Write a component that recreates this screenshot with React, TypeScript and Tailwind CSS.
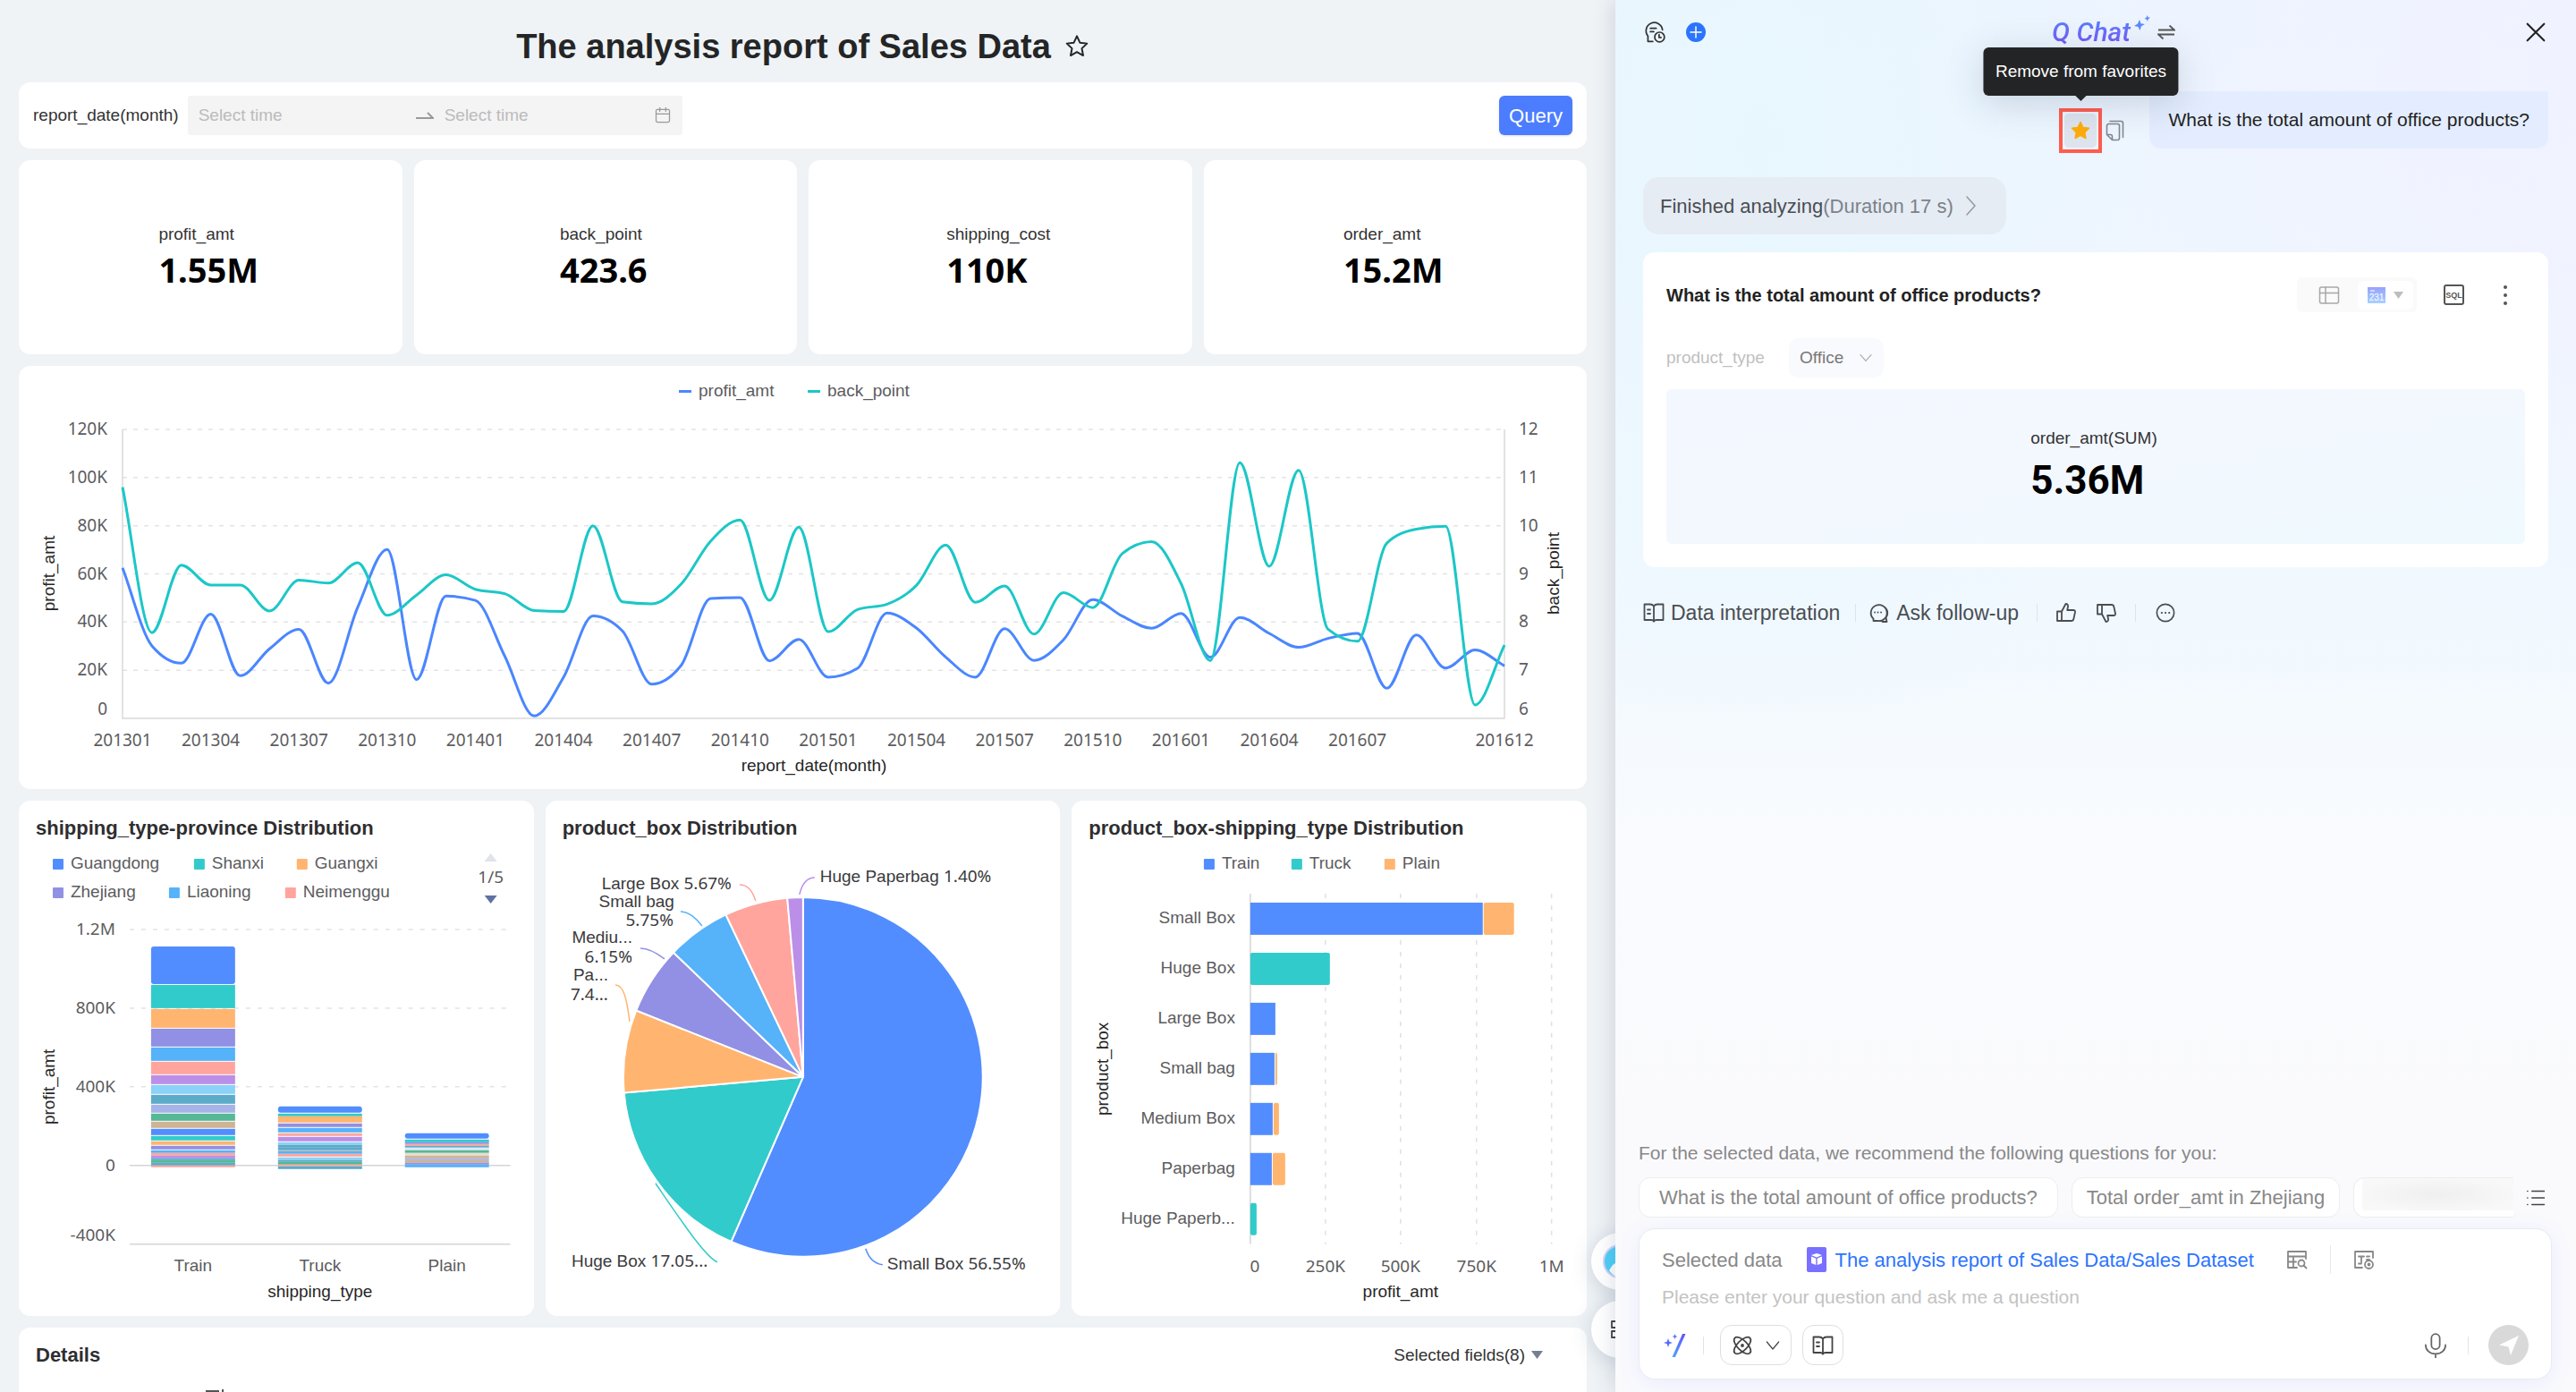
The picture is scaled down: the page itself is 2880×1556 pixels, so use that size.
import React from "react";
import clsx from "clsx";

const kpis = [
  { label: "profit_amt", value: "1.55M" },
  { label: "back_point", value: "423.6" },
  { label: "shipping_cost", value: "110K" },
  { label: "order_amt", value: "15.2M" },
];

const profit = [
  62.5, 30.1, 22.9, 43.3, 17.7, 28.9, 37, 14.6, 46.2, 70.1, 16.1, 50.8, 49,
  25.8, 1, 17.1, 42.5, 36.3, 14.2, 22, 49.8, 50.2, 23.9, 32.8, 17.1, 20.8, 43.7,
  37.5, 25.4, 17.1, 37.2, 24.1, 32.6, 49.3, 42.5, 37.4, 43.6, 25.4, 41.9, 35.3,
  29.5, 33.2, 35.3, 12.5, 34.6, 20.9, 28.4, 21.8,
];

const backPoint = [
  10.8, 7.78, 9.18, 8.77, 8.77, 8.23, 8.87, 8.81, 9.23, 8.14, 8.56, 8.98, 8.68,
  8.59, 8.24, 8.22, 10, 8.42, 8.38, 8.79, 9.68, 10.12, 8.45, 9.97, 7.8, 8.26,
  8.37, 8.76, 9.6, 8.41, 8.75, 7.75, 8.61, 8.3, 9.42, 9.67, 8.8, 7.2, 11.31,
  9.16, 11.15, 7.85, 7.6, 9.64, 9.93, 9.99, 6.28, 7.52,
];

const months = [
  { label: "201301", i: 0 },
  { label: "201304", i: 3 },
  { label: "201307", i: 6 },
  { label: "201310", i: 9 },
  { label: "201401", i: 12 },
  { label: "201404", i: 15 },
  { label: "201407", i: 18 },
  { label: "201410", i: 21 },
  { label: "201501", i: 24 },
  { label: "201504", i: 27 },
  { label: "201507", i: 30 },
  { label: "201510", i: 33 },
  { label: "201601", i: 36 },
  { label: "201604", i: 39 },
  { label: "201607", i: 42 },
  { label: "201612", i: 47 },
];

const BLUE = "#528dff";
const TEAL = "#32cbcb";
const ORANGE = "#ffb570";
const PURPLE = "#9190e4";
const SKY = "#56b2f9";
const PINK = "#ffa59d";
const VIOLET = "#bb8fe8";
const LIGHT = "#8bd1f8";
const STEEL = "#5cabc9";
const PERI = "#a5b3e8";
const GREEN = "#55b896";
const TAN = "#cfb395";

const palette = [BLUE, TEAL, ORANGE, PURPLE, SKY, PINK, VIOLET, LIGHT, STEEL, PERI, GREEN, TAN];

// top edge of every segment, the last number closes the stack
const stacks = [
  {
    label: "Train",
    x: 148,
    edges: [163, 206, 233, 255, 276, 292, 307, 318, 329, 340, 350, 359, 367, 375, 381, 386, 391, 394, 397, 400, 402, 405, 408, 410],
    colors: [...palette, BLUE, TEAL, ORANGE, PURPLE, SKY, PINK, VIOLET, STEEL, GREEN, STEEL, PINK],
  },
  {
    label: "Truck",
    x: 290,
    edges: [342, 350, 353, 361, 366, 372, 376, 382, 385, 388, 391, 392, 395, 399, 402, 404, 407, 409, 412],
    colors: [BLUE, TEAL, ORANGE, PURPLE, SKY, PINK, VIOLET, LIGHT, STEEL, STEEL, TAN, SKY, PINK, LIGHT, STEEL, GREEN, PINK, STEEL],
  },
  {
    label: "Plain",
    x: 432,
    edges: [372, 379, 382, 384, 386, 388, 391, 394, 397, 400, 402, 405, 407, 410],
    colors: [BLUE, TEAL, PURPLE, PINK, STEEL, "#dfe6f5", GREEN, "#e6ddd0", TAN, PERI, TAN, PURPLE, SKY],
  },
];

const provinces = [
  { name: "Guangdong", color: BLUE, x: 38, y: 70 },
  { name: "Shanxi", color: TEAL, x: 196, y: 70 },
  { name: "Guangxi", color: ORANGE, x: 311, y: 70 },
  { name: "Zhejiang", color: PURPLE, x: 38, y: 102 },
  { name: "Liaoning", color: SKY, x: 168, y: 102 },
  { name: "Neimenggu", color: PINK, x: 298, y: 102 },
];

const slices = [
  { value: 56.55, color: BLUE },
  { value: 17.05, color: TEAL },
  { value: 7.43, color: ORANGE },
  { value: 6.15, color: PURPLE },
  { value: 5.75, color: SKY },
  { value: 5.67, color: PINK },
  { value: 1.4, color: VIOLET },
];

const boxes = [
  { name: "Small Box", bars: [{ w: 260, c: BLUE }, { w: 35, c: ORANGE }] },
  { name: "Huge Box", bars: [{ w: 89, c: TEAL }] },
  { name: "Large Box", bars: [{ w: 28, c: BLUE }] },
  { name: "Small bag", bars: [{ w: 27, c: BLUE }, { w: 3, c: ORANGE }] },
  { name: "Medium Box", bars: [{ w: 25, c: BLUE }, { w: 7, c: ORANGE }] },
  { name: "Paperbag", bars: [{ w: 24, c: BLUE }, { w: 15, c: ORANGE }] },
  { name: "Huge Paperb...", bars: [{ w: 7, c: TEAL }] },
];

const NUM = "font-['Noto_Sans',sans-serif]";

// monotone cubic interpolation, keeps peaks from overshooting
const smoothPath = (pts: number[][]) => {
  const n = pts.length;
  const slope = (i: number) => (pts[i + 1][1] - pts[i][1]) / (pts[i + 1][0] - pts[i][0]);
  const m = pts.map((_, i) => {
    if (i === 0) return slope(0);
    if (i === n - 1) return slope(n - 2);
    const a = slope(i - 1);
    const b = slope(i);
    if (a * b <= 0) return 0;
    return Math.sign(a) * Math.min(Math.abs(a + b) / 2, 2 * Math.abs(a), 2 * Math.abs(b));
  });
  let d = `M${pts[0][0]} ${pts[0][1]}`;
  for (let i = 0; i < n - 1; i++) {
    const h = (pts[i + 1][0] - pts[i][0]) / 3;
    d += `C${pts[i][0] + h} ${pts[i][1] + m[i] * h} ${pts[i + 1][0] - h} ${pts[i + 1][1] - m[i + 1] * h} ${pts[i + 1][0]} ${pts[i + 1][1]}`;
  }
  return d;
};

const Icon = ({
  children,
  className = "size-6",
  strokeWidth = 1.8,
}: {
  children: React.ReactNode;
  className?: string;
  strokeWidth?: number;
}) => (
  <svg
    viewBox="0 0 24 24"
    fill="none"
    stroke="currentColor"
    strokeWidth={strokeWidth}
    strokeLinecap="round"
    strokeLinejoin="round"
    className={clsx("shrink-0", className)}
    aria-hidden="true"
  >
    {children}
  </svg>
);

const BookIcon = ({ className }: { className?: string }) => (
  <Icon className={className}>
    <path d="M12 4.500C11 3.200 9.500 2.500 8 2.500H1.500v17.500H9c1.500 0 2.500.5 3 1.800.5-1.300 1.500-1.800 3-1.800h7.500V2.500H16c-1.500 0-3 .7-4 2zM12 4.500v17M5 8.500h3M5 13h3" />
  </Icon>
);

const Card = ({ children, className }: { children: React.ReactNode; className?: string }) => (
  <section className={clsx("rounded-[13px] bg-white", className)}>{children}</section>
);

const CardTitle = ({ children }: { children: React.ReactNode }) => (
  <h2 className="px-[19px] pt-4 text-[22px] leading-[30px] font-bold text-[#2e2e30]">{children}</h2>
);

const Label = ({
  x,
  y,
  children,
  anchor = "start",
  num,
  fill = "#5c5c5e",
}: {
  x: number;
  y: number;
  children: React.ReactNode;
  anchor?: "start" | "middle" | "end";
  num?: boolean;
  fill?: string;
}) => (
  <text x={x} y={y + 6} textAnchor={anchor} fill={fill} fontSize={19} className={num ? NUM : undefined}>
    {children}
  </text>
);

const AxisName = ({ x, y, children }: { x: number; y: number; children: string }) => (
  <text transform={`translate(${x + 5} ${y}) rotate(-90)`} textAnchor="middle" fill="#262626" fontSize={19}>
    {children}
  </text>
);

const LineChart = () => {
  const x0 = 116;
  const x1 = 1661;
  const top = 71;
  const bottom = 394;
  const px = (i: number) => x0 + ((x1 - x0) * i) / 47;
  const lineA = profit.map((v, i) => [px(i), bottom - ((bottom - top) * v) / 120]);
  const lineB = backPoint.map((v, i) => [px(i), bottom - ((bottom - top) * (v - 6)) / 6]);
  return (
    <svg viewBox="0 0 1753 473" className="block w-full" role="img" aria-label="profit_amt and back_point by month">
      <rect x="738" y="27" width="14" height="3" fill="#4a86ff" />
      <Label x={760} y={28}>profit_amt</Label>
      <rect x="882" y="27" width="14" height="3" fill="#1cc7c7" />
      <Label x={904} y={28}>back_point</Label>
      {[0, 1, 2, 3, 4, 5].map((n) => {
        const y = top + (n * (bottom - top)) / 6;
        return (
          <g key={n}>
            <line x1={x0} x2={x1} y1={y} y2={y} stroke="#e3e3e3" strokeWidth="1.500" strokeDasharray="5 7" />
            <Label x={99} y={y} anchor="end" num>{`${120 - n * 20}K`}</Label>
            <Label x={1677} y={y} num>{12 - n}</Label>
          </g>
        );
      })}
      <Label x={99} y={384} anchor="end" num>0</Label>
      <Label x={1677} y={384} num>6</Label>
      <path d={`M${x0} ${top}V${bottom}H${x1}V${top}`} fill="none" stroke="#d9d9d9" strokeWidth="1.500" />
      {months.map((m) => (
        <Label key={m.label} x={px(m.i)} y={419} anchor="middle" num>{m.label}</Label>
      ))}
      <path d={smoothPath(lineA)} fill="none" stroke="#4a86ff" strokeWidth="3" />
      <path d={smoothPath(lineB)} fill="none" stroke="#1cc7c7" strokeWidth="3" />
      <Label x={889} y={447} anchor="middle" fill="#262626">report_date(month)</Label>
      <AxisName x={35} y={232}>profit_amt</AxisName>
      <AxisName x={1717} y={232}>back_point</AxisName>
    </svg>
  );
};

const ProvinceChart = () => (
  <svg viewBox="0 46 576 530" className="block w-full" role="img" aria-label="profit_amt by shipping_type and province">
    {provinces.map((p) => (
      <g key={p.name}>
        <rect x={p.x} y={p.y - 5} width="12" height="12" rx="1" fill={p.color} />
        <Label x={p.x + 20} y={p.y}>{p.name}</Label>
      </g>
    ))}
    <path d="M521 68l7-9 7 9z" fill="#e0e2ec" />
    <Label x={528} y={86} anchor="middle" num>1/5</Label>
    <path d="M521 106h14l-7 9z" fill="#6072a4" />
    {[
      { t: "1.2M", y: 144 },
      { t: "800K", y: 232 },
      { t: "400K", y: 320 },
    ].map((g) => (
      <g key={g.t}>
        <line x1="124" x2="550" y1={g.y} y2={g.y} stroke="#e3e3e3" strokeWidth="1.500" strokeDasharray="5 8" />
        <Label x={108} y={g.y} anchor="end" num>{g.t}</Label>
      </g>
    ))}
    <Label x={108} y={408} anchor="end" num>0</Label>
    <Label x={108} y={486} anchor="end" num>-400K</Label>
    <path d="M124 408h426M124 496h426" stroke="#d5d5d5" strokeWidth="1.500" />
    {stacks.map((s) => (
      <g key={s.label}>
        {s.colors.map((c, i) => {
          const h = s.edges[i + 1] - s.edges[i];
          return (
            <rect key={i} x={s.x} y={s.edges[i]} width="94" height={h > 3 ? h - 1 : h} rx={i === 0 ? 3 : 0} fill={c} />
          );
        })}
        <Label x={s.x + 47} y={520} anchor="middle">{s.label}</Label>
      </g>
    ))}
    <Label x={337} y={549} anchor="middle" fill="#262626">shipping_type</Label>
    <AxisName x={35} y={320}>profit_amt</AxisName>
  </svg>
);

const PieLabel = ({ x, y, name, value, end }: { x: number; y: number; name?: string; value?: string; end?: boolean }) => (
  <Label x={x} y={y} anchor={end ? "end" : "start"} fill="#3a3a3c">
    {name}
    {name && value ? " " : ""}
    {value && <tspan className={NUM}>{value}</tspan>}
  </Label>
);

const PieChart = () => {
  const cx = 288;
  const cy = 309;
  const r = 201;
  const at = (pct: number) => {
    const a = (pct / 100) * Math.PI * 2;
    return `${cx + r * Math.sin(a)} ${cy - r * Math.cos(a)}`;
  };
  let sum = 0;
  return (
    <svg viewBox="0 46 576 530" className="block w-full" role="img" aria-label="product_box share">
      {slices.map((s) => {
        const from = at(sum);
        sum += s.value;
        return (
          <path
            key={s.color}
            d={`M${cx} ${cy}L${from}A${r} ${r} 0 ${s.value > 50 ? 1 : 0} 1 ${at(sum)}Z`}
            fill={s.color}
            stroke="#fff"
            strokeWidth="2"
          />
        );
      })}
      <g fill="none" strokeWidth="1.500">
        <path d="M284 105C287 92 292 86 301 86" stroke={VIOLET} />
        <path d="M217 94c9 0 14 6 18 18" stroke={PINK} />
        <path d="M151 124c9 0 17 7 24 16" stroke={SKY} />
        <path d="M106 165c9 0 18 5 27 12" stroke={PURPLE} />
        <path d="M78 206c10 0 13 18 16 41" stroke={ORANGE} />
        <path d="M123 428c24 35 55 82 69 88" stroke={TEAL} />
        <path d="M358 501c4 12 10 17 19 18" stroke={BLUE} />
      </g>
      <PieLabel x={307} y={85} name="Huge Paperbag" value="1.40%" />
      <PieLabel x={208} y={93} name="Large Box" value="5.67%" end />
      <PieLabel x={144} y={113} name="Small bag" end />
      <PieLabel x={143} y={134} value="5.75%" end />
      <PieLabel x={97} y={153} name="Mediu..." end />
      <PieLabel x={97} y={175} value="6.15%" end />
      <PieLabel x={70} y={195} name="Pa..." end />
      <PieLabel x={70} y={217} value="7.4..." end />
      <PieLabel x={29} y={515} name="Huge Box" value="17.05..." />
      <PieLabel x={382} y={518} name="Small Box" value="56.55%" />
    </svg>
  );
};

const BoxChart = () => (
  <svg viewBox="0 46 576 530" className="block w-full" role="img" aria-label="profit_amt by product_box and shipping_type">
    {[
      { t: "Train", c: BLUE, x: 148 },
      { t: "Truck", c: TEAL, x: 246 },
      { t: "Plain", c: ORANGE, x: 350 },
    ].map((l) => (
      <g key={l.t}>
        <rect x={l.x} y="65" width="12" height="12" rx="1" fill={l.c} />
        <Label x={l.x + 20} y={70}>{l.t}</Label>
      </g>
    ))}
    {[284, 368, 453, 537].map((x) => (
      <line key={x} x1={x} x2={x} y1="104" y2="496" stroke="#e0e0e0" strokeWidth="1.500" strokeDasharray="5 8" />
    ))}
    <path d="M200 104v392" stroke="#d5d5d5" strokeWidth="1.500" />
    {boxes.map((b, row) => {
      const cy = 132 + row * 56;
      let x = 200;
      return (
        <g key={b.name}>
          <Label x={183} y={cy - 1} anchor="end">{b.name}</Label>
          {b.bars.map((bar, i) => {
            const left = x;
            x += bar.w;
            return (
              <rect key={i} x={i ? left + 1 : left} y={cy - 18} width={i ? bar.w - 1 : bar.w} height="36" rx={bar.c === BLUE ? 0 : 2} fill={bar.c} />
            );
          })}
        </g>
      );
    })}
    <Label x={205} y={521} anchor="middle" num>0</Label>
    <Label x={284} y={521} anchor="middle" num>250K</Label>
    <Label x={368} y={521} anchor="middle" num>500K</Label>
    <Label x={453} y={521} anchor="middle" num>750K</Label>
    <Label x={537} y={521} anchor="middle" num>1M</Label>
    <Label x={368} y={549} anchor="middle" fill="#262626">profit_amt</Label>
    <AxisName x={36} y={300}>product_box</AxisName>
  </svg>
);

const Report = () => (
  <main className="relative h-full min-w-0 flex-1 overflow-hidden bg-[#eff3f6] pr-8 pl-[21px]">
    <header className="flex h-[92px] items-center justify-center gap-[15px] pt-3">
      <h1 className="text-[38px] leading-[50px] font-bold text-[#242526]">The analysis report of Sales Data</h1>
      <button aria-label="Add to favorites" className="text-[#242526]">
        <Icon className="size-[28px]" strokeWidth={1.7}>
          <path d="M12 2l2.900 6.300 6.800.8-5 4.700 1.300 6.800-6-3.400-6 3.400 1.300-6.800-5-4.700 6.800-.8z" />
        </Icon>
      </button>
    </header>

    <div className="flex flex-col gap-[13px]">
      <Card className="flex items-center px-4 py-[15px]">
        <label htmlFor="from" className="mr-2.5 text-[19px] text-[#333]">
          report_date(month)
        </label>
        <div className="flex h-11 items-center rounded-[3px] bg-[#f4f4f4] px-3 text-[19px] text-[#999]">
          <input id="from" placeholder="Select time" className="w-[243px] bg-transparent outline-none placeholder:text-[#bbb]" />
          <svg viewBox="0 0 20 12" className="mr-3 w-5" fill="none" stroke="currentColor" strokeWidth="2" aria-hidden="true">
            <path d="M0 9h19l-6-6" />
          </svg>
          <input aria-label="End time" placeholder="Select time" className="w-[234px] bg-transparent outline-none placeholder:text-[#bbb]" />
          <Icon className="size-5" strokeWidth={1.5}>
            <rect x="3" y="4" width="18" height="17" rx="2" />
            <path d="M3 10h18M8 1.500v5M16 1.500v5" />
          </Icon>
        </div>
        <button className="ml-auto h-11 rounded-[6px] bg-[#4c7dff] px-[11px] text-[22px] text-white shadow-sm">Query</button>
      </Card>

      <div className="grid grid-cols-4 gap-[13px]">
        {kpis.map((k) => (
          <Card key={k.label} className="flex justify-center pt-[67px] pr-1 pb-[71px]">
            <div>
              <div className="text-[19px] leading-[31px] text-[#333]">{k.label}</div>
              <div className="font-['Noto_Sans',sans-serif] text-[38px] leading-[48px] font-bold text-black">{k.value}</div>
            </div>
          </Card>
        ))}
      </div>

      <Card>
        <LineChart />
      </Card>

      <div className="grid grid-cols-3 gap-[13px]">
        <Card>
          <CardTitle>shipping_type-province Distribution</CardTitle>
          <ProvinceChart />
        </Card>
        <Card>
          <CardTitle>product_box Distribution</CardTitle>
          <PieChart />
        </Card>
        <Card>
          <CardTitle>product_box-shipping_type Distribution</CardTitle>
          <BoxChart />
        </Card>
      </div>

      <Card className="h-40">
        <div className="flex items-center justify-between">
          <CardTitle>Details</CardTitle>
          <button className="mr-[49px] flex items-center gap-[7px] pt-4 text-[19px] leading-[30px] text-[#333]">
            Selected fields(8)
            <svg viewBox="0 0 13 9" className="w-[13px]" aria-hidden="true">
              <path d="M0 0h13L6.500 9z" fill="#777d92" />
            </svg>
          </button>
        </div>
        <svg viewBox="0 0 22 22" className="mt-[22px] ml-[209px] w-[22px]" fill="none" stroke="#555" strokeWidth="2" aria-hidden="true">
          <path d="M0 3h15M0 10h10M0 17h10M19 1v18l-4-5" />
        </svg>
      </Card>
    </div>

    <button
      aria-label="Assistant"
      className="absolute right-[-37px] bottom-[114px] flex size-16 items-center justify-center rounded-full bg-white shadow-[0_4px_24px_rgba(60,80,120,0.2)]"
    >
      <svg viewBox="0 0 38 38" className="w-[38px]" aria-hidden="true">
        <circle cx="19" cy="19" r="18" fill="#4fd0f8" stroke="#cfd2f8" strokeWidth="2" />
        <path d="M7 29c3-4 4-9 12-9v17c-5 0-9-4-12-8z" fill="#fff" />
      </svg>
    </button>
    <button
      aria-label="Apps"
      className="absolute right-[-37px] bottom-[38px] flex size-16 items-center justify-center rounded-full bg-white text-[#444] shadow-[0_4px_24px_rgba(60,80,120,0.2)]"
    >
      <Icon className="size-6">
        <path d="M3 3h7v7H3zM14 3h7v7h-7zM3 14h7v7H3zM14 14h7v7h-7z" />
      </Icon>
    </button>
  </main>
);

const ChatHeader = () => (
  <header className="flex h-[72px] items-center px-[31px]">
    <div className="flex flex-1 items-center gap-[22px]">
      <button aria-label="History" className="text-[#333]">
        <Icon className="size-[26px]" strokeWidth={1.6}>
          <path d="M20 9.500A8.500 8.500 0 1 0 5 16v5.500h5M7.500 8h6M7.500 11.500h3.500" />
          <circle cx="17" cy="17" r="5" />
          <path d="M16.500 14.500v3h2" />
        </Icon>
      </button>
      <button aria-label="New chat" className="flex size-[22px] items-center justify-center rounded-full bg-[#2b74ff] text-white">
        <Icon className="size-4" strokeWidth={2.2}>
          <path d="M12 3v18M3 12h18" />
        </Icon>
      </button>
    </div>
    <div className="flex items-center pl-10">
      <span className="bg-linear-to-b from-[#4f86ff] to-[#7a4cf6] bg-clip-text pr-1 font-['Roboto',sans-serif] text-[30px] leading-9 font-medium text-transparent italic">
        Q Chat
      </span>
      <svg viewBox="0 0 18 18" className="mb-5 w-[18px]" fill="#5b8bff" aria-hidden="true">
        <path d="M6 5l1.500 4.200L12 10l-4 2.200L6.500 17 4.500 13 0 12l4-2.500zM14.500 0l1 2.200 2.500.6-2.200 1.500-.8 2.500-1.300-2.200-2.200-.6 2.200-1.400z" />
      </svg>
      <button aria-label="Switch mode" className="ml-2 text-[#555]">
        <svg viewBox="0 0 20 16" className="w-5" fill="none" stroke="currentColor" strokeWidth="1.800" aria-hidden="true">
          <path d="M1 5.500h18l-5.500-5M19 10.500H1l5.500 5" />
        </svg>
      </button>
    </div>
    <div className="flex flex-1 justify-end">
      <button aria-label="Close" className="text-[#222]">
        <Icon className="size-7" strokeWidth={1.8}>
          <path d="M4 4l16 16M20 4L4 20" />
        </Icon>
      </button>
    </div>
  </header>
);

const Divider = ({ className }: { className?: string }) => (
  <span className={clsx("h-5 w-px bg-[#e0e4ea]", className)} />
);

const Answer = () => (
  <section className="mt-5 rounded-[13px] bg-white px-[26px] pt-7 pb-[26px]">
    <div className="flex h-[39px] items-center">
      <h2 className="flex-1 text-[20px] font-bold text-[#222]">What is the total amount of office products?</h2>
      <div className="flex h-[39px] items-center rounded-[6px] bg-[#fafafa] pr-1 pl-6 text-[#a8a8a8]">
        <button aria-label="Table" className="mr-5">
          <Icon className="size-6" strokeWidth={1.5}>
            <rect x="1.500" y="3" width="21" height="18" rx="2" />
            <path d="M1.500 9.500h21M8 3v18" />
          </Icon>
        </button>
        <button aria-label="Indicator card" className="flex h-8 items-center gap-[9px] rounded-[6px] bg-white px-[11px]">
          <svg viewBox="0 0 20 18" className="w-5" aria-hidden="true">
            <defs>
              <linearGradient id="card" x1="0" y1="0" x2="0" y2="1">
                <stop offset="0" stopColor="#98a2fb" />
                <stop offset="1" stopColor="#a6d1ff" />
              </linearGradient>
            </defs>
            <rect width="20" height="18" fill="url(#card)" />
            <path d="M3 4h5" stroke="#fff" />
            <text x="10" y="15" textAnchor="middle" fontSize="10" fill="#fff">231</text>
          </svg>
          <svg viewBox="0 0 11 8" className="w-[11px]" aria-hidden="true">
            <path d="M0 0h11L5.500 8z" fill="#bdbdbd" />
          </svg>
        </button>
      </div>
      <button className="ml-[30px] h-[23px] w-[23px] rounded-[3px] border-2 border-[#555] text-[9px] leading-[18px] font-bold text-[#555]">SQL</button>
      <button aria-label="More" className="mr-5 ml-11 flex flex-col gap-[5px]">
        <i className="size-1 rounded-full bg-[#555]" />
        <i className="size-1 rounded-full bg-[#555]" />
        <i className="size-1 rounded-full bg-[#555]" />
      </button>
    </div>

    <div className="mt-[29px] flex items-center text-[19px]">
      <label htmlFor="ptype" className="w-[137px] text-[#bfbfbf]">
        product_type
      </label>
      <div className="relative text-[#aaa]">
        <select id="ptype" className="h-11 w-[106px] appearance-none rounded-[10px] bg-[#f9fafd] pl-3 text-[#777]">
          <option>Office</option>
        </select>
        <Icon className="pointer-events-none absolute top-3.5 right-3 size-4" strokeWidth={1.8}>
          <path d="M3 7l9 10 9-10" />
        </Icon>
      </div>
    </div>

    <div className="mt-[13px] flex h-[173px] items-center justify-center rounded-[6px] bg-linear-to-br from-[#f3f7ff] via-[#f3f8ff] to-[#effaff] pr-1 pb-1">
      <div>
        <div className="text-[19px] leading-[34px] text-[#333]">order_amt(SUM)</div>
        <div className="font-['Roboto',sans-serif] text-[44px] leading-[60px] font-bold text-black">5.36M</div>
      </div>
    </div>
  </section>
);

const Actions = () => (
  <div className="mt-[34px] flex h-[34px] items-center text-[23px] text-[#4a4d52]">
    <button className="flex items-center gap-[7px]">
      <BookIcon className="size-6" />
      Data interpretation
    </button>
    <Divider className="mr-[14px] ml-[17px]" />
    <button className="flex items-center gap-[7px]">
      <Icon className="size-6">
        <path d="M5.500 18.500V21H10a9 9 0 1 0-5-2.800" />
        <path d="M19 6.500a8.500 8.500 0 0 1 .5 11l1 4.500h-5M7 11.500h.1M10.500 11.500h.1M14 11.500h.1" />
      </Icon>
      Ask follow-up
    </button>
    <Divider className="mr-5 ml-[20px]" />
    <button aria-label="Like" className="mr-[21px]">
      <Icon className="size-6">
        <path d="M2 10.500h5V21H2zM7 10.500L11.500 2c2 0 3 1.500 2.500 3.500L13.200 9H20c1.500 0 2.200 1 2 2.200L20.300 19c-.3 1.300-1.200 2-2.500 2H7" />
      </Icon>
    </button>
    <button aria-label="Dislike" className="mr-5">
      <Icon className="size-6">
        <path d="M2 3h5v10.500H2zM7 13.500l4.500 8.500c2 0 3-1.500 2.500-3.500l-.8-3.500H20c1.500 0 2.200-1 2-2.200L20.300 5c-.3-1.300-1.200-2-2.500-2H7" />
      </Icon>
    </button>
    <Divider />
    <button aria-label="More actions" className="ml-[22px]">
      <Icon className="size-[22px]">
        <circle cx="12" cy="12" r="10.500" />
        <path d="M7.500 12h.1M12 12h.1M16.500 12h.1" strokeWidth="2.400" />
      </Icon>
    </button>
  </div>
);

const Composer = () => (
  <div className="mt-3 rounded-[18px] border border-[#e9eaf2] bg-white px-[25px] pt-[18px] pb-[15px] shadow-[0_4px_24px_rgba(90,110,255,0.10)]">
    <div className="flex h-8 items-center text-[22px] text-[#888]">
      <span className="mr-[27px]">Selected data</span>
      <svg viewBox="0 0 22 28" className="mr-[10px] w-[22px]" aria-hidden="true">
        <rect width="22" height="28" rx="2" fill="#7a70ff" />
        <path d="M11 7l6 2-6 2.500L5 9zM5 10.500l5.300 2.200V20L5 18zM17 10.500l-5.300 2.200V20l5.300-2z" fill="#fff" />
      </svg>
      <a href="#" className="text-[#2b74ff]">The analysis report of Sales Data/Sales Dataset</a>
      <button aria-label="Preview data" className="ml-9">
        <Icon className="size-6">
          <path d="M12 21H2V3h20v8M2 8.500h20M2 14.500h9M8 8.500V21" />
          <circle cx="17" cy="16" r="3.500" />
          <path d="M19.500 18.500l3 3" />
        </Icon>
      </button>
      <span className="mx-[25px] h-8 w-px bg-[#e8e8ec]" />
      <button aria-label="Field settings">
        <Icon className="size-6">
          <path d="M10 21H2V3h20v7M6 8.500h6M9 8.500V15M15 8.500h3M15 12h3M6 16.500h3" />
          <circle cx="17.500" cy="17.500" r="4.500" />
          <circle cx="17.500" cy="17.500" r="1" />
        </Icon>
      </button>
    </div>
    <textarea
      aria-label="Question"
      rows={1}
      placeholder="Please enter your question and ask me a question"
      className="mt-[11px] block h-[30px] w-full resize-none bg-transparent text-[21px] leading-[30px] outline-none placeholder:text-[#c3c3c3]"
    />
    <div className="mt-4 flex h-[45px] items-center text-[#444]">
      <button aria-label="Magic" className="ml-0.5 mr-[18px]">
        <svg viewBox="0 0 26 28" className="w-[26px]" aria-hidden="true">
          <defs>
            <linearGradient id="wand" x1="0" y1="0" x2="0" y2="1">
              <stop offset="0" stopColor="#6455f5" />
              <stop offset="1" stopColor="#4fa3ff" />
            </linearGradient>
          </defs>
          <path d="M21 1h3.500L13 27H9.500z" fill="url(#wand)" />
          <path d="M5 6l1.300 3.700L10 11l-3.700 1.300L5 16l-1.300-3.700L0 11l3.700-1.300zM12.500 1l.8 2.200 2.200.8-2.200.8-.8 2.200-.8-2.200L9.500 4l2.200-.8z" fill="#5b6bff" />
        </svg>
      </button>
      <Divider />
      <button aria-label="Model" className="ml-[18px] flex h-[45px] items-center gap-[14px] rounded-[13px] border border-[#dedede] px-3">
        <Icon className="size-6">
          <ellipse cx="12" cy="12" rx="5.500" ry="12" transform="rotate(45 12 12)" />
          <ellipse cx="12" cy="12" rx="5.500" ry="12" transform="rotate(-45 12 12)" />
          <circle cx="12" cy="12" r="1" fill="currentColor" />
        </Icon>
        <Icon className="size-4">
          <path d="M2 6l10 12L22 6" />
        </Icon>
      </button>
      <button aria-label="Knowledge" className="ml-3 flex h-[45px] items-center rounded-[13px] border border-[#dedede] px-[10px]">
        <BookIcon className="size-6" />
      </button>
      <button aria-label="Voice" className="mr-[22px] ml-auto text-[#666]">
        <Icon className="size-[28px]" strokeWidth={1.5}>
          <rect x="8" y="1" width="8" height="14.500" rx="4" />
          <path d="M2.500 11.500c0 5 4 8.500 9.500 8.500s9.500-3.500 9.500-8.500M12 20v3.500" />
        </Icon>
      </button>
      <Divider />
      <button aria-label="Send" className="ml-[22px] flex size-[45px] items-center justify-center rounded-full bg-[#d9d9d9]">
        <svg viewBox="0 0 24 24" className="w-6" fill="#fff" aria-hidden="true">
          <path d="M23 1L14 23l-2.500-9.500L1 11.500zM23 1L11 13" />
        </svg>
      </button>
    </div>
  </div>
);

const Chat = () => (
  <aside className="relative flex h-full w-[1074px] shrink-0 flex-col bg-[radial-gradient(ellipse_at_15%_10%,#e8f7fe_0%,transparent_36%),radial-gradient(ellipse_at_100%_5%,#f1f2ff_0%,transparent_32%),linear-gradient(180deg,#edf4ff_0%,#eff6ff_20%,#f1f9ff_45%,#f5fafe_52%,#f9fbfe_60%,#fafafd_80%)] shadow-[-4px_0_20px_rgba(40,60,90,0.14)]">
    <ChatHeader />
    <div className="flex flex-1 flex-col px-[31px] pt-[30px]">
      <div className="flex items-start justify-end">
        <div className="relative mt-[19px] h-[50px] w-12 border-4 border-[#ff5c4d] p-0.5">
          <button aria-label="Remove from favorites" aria-describedby="fav-tip" className="flex size-full items-center justify-center rounded-[5px] bg-[#dde4ee]">
            <svg viewBox="0 0 24 24" className="w-6" fill="#ffab0a" stroke="#ffab0a" strokeWidth="1.500" strokeLinejoin="round" aria-hidden="true">
              <path d="M12 2.500l2.900 6 6.600.8-4.800 4.600 1.200 6.600-5.900-3.200-5.900 3.200 1.200-6.600-4.800-4.600 6.600-.8z" />
            </svg>
          </button>
          <div
            id="fav-tip"
            role="tooltip"
            className="absolute bottom-[60px] left-1/2 flex h-[54px] -translate-x-1/2 items-center rounded-[6px] bg-[#232426] px-[13px] text-[19px] whitespace-nowrap text-white shadow-[0_8px_40px_rgba(60,80,110,0.22)]"
          >
            Remove from favorites
            <i className="absolute -bottom-1 left-1/2 size-2.5 -translate-x-1/2 rotate-45 bg-[#232426]" />
          </div>
        </div>
        <button aria-label="Copy" className="mt-8 mr-[26px] ml-[3px] text-[#808790]">
          <Icon className="size-6" strokeWidth={1.6}>
            <path d="M6 1.500h12.500a2 2 0 0 1 2 2v16M2.500 6.500a2 2 0 0 1 2-2h10a2 2 0 0 1 2 2v14a2 2 0 0 1-2 2H8.500l-6-6zM2.500 16.500h4a2 2 0 0 1 2 2v4" />
          </Icon>
        </button>
        <p className="flex h-16 items-center rounded-b-[13px] bg-[#e4edff] px-[21px] text-[21px] text-[#222]">
          What is the total amount of office products?
        </p>
      </div>

      <button className="mt-[27px] flex h-16 items-center self-start rounded-[18px] bg-[#e5ecf4] pr-[27px] pl-[19px] text-[22px] text-[#4a4d52]">
        Finished analyzing<span className="text-[#7d8188]">(Duration 17 s)</span>
        <Icon className="ml-2 size-6 text-[#999]" strokeWidth={1.5}>
          <path d="M7 2l9 10-9 10" />
        </Icon>
      </button>

      <Answer />
      <Actions />
    </div>

    <div className="pr-[27px] pb-[14px] pl-[26px]">
      <p className="text-[21px] leading-[30px] text-[#888]">For the selected data, we recommend the following questions for you:</p>
      <div className="mt-3 flex items-center gap-[15px] text-[22px] text-[#888]">
        <button className="h-[45px] shrink-0 rounded-[13px] border border-[#ededf0] bg-white px-[22px]">What is the total amount of office products?</button>
        <button className="h-[45px] shrink-0 rounded-[13px] border border-[#ededf0] bg-white px-4">Total order_amt in Zhejiang</button>
        <div className="h-[45px] flex-1 rounded-l-[13px] border border-r-0 border-[#ededf0] bg-white pl-[9px]">
          <div className="h-9 bg-[radial-gradient(ellipse_at_center,#efefef_0%,#f8f8f9_75%)]" />
        </div>
        <button aria-label="All questions" className="mr-2 text-[#444]">
          <Icon className="size-5" strokeWidth={2}>
            <path d="M7 3h17M7 12h17M7 21h17M1 3h.1M1 12h.1M1 21h.1" />
          </Icon>
        </button>
      </div>
      <Composer />
    </div>
  </aside>
);

const App = () => {
  return (
    <div className="flex h-screen overflow-hidden font-['Liberation_Sans',Arial,sans-serif]">
      <Report />
      <Chat />
    </div>
  );
};

export default App;
